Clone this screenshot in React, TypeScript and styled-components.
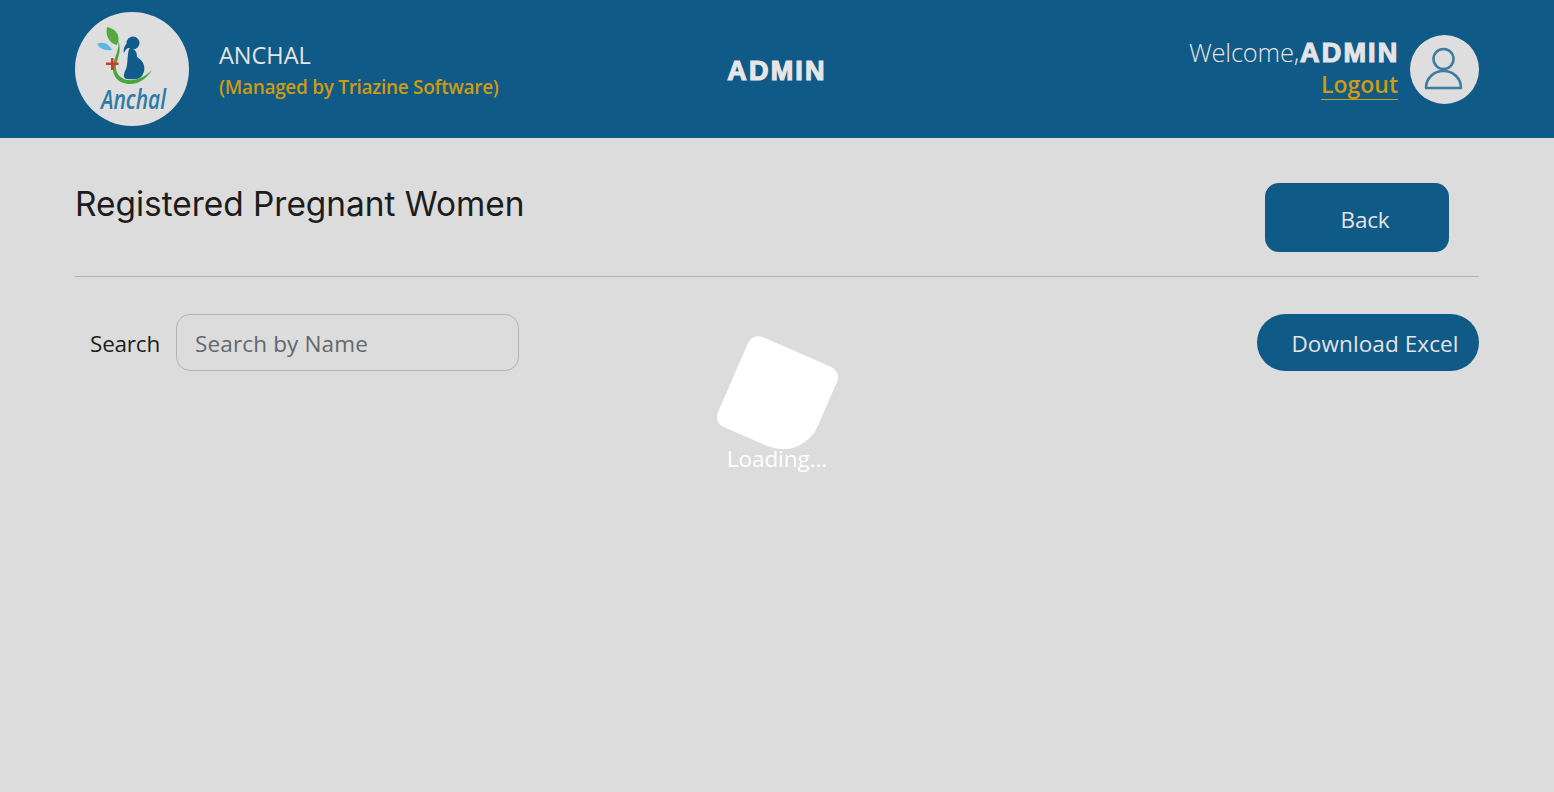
import React from "react";
import styled, { createGlobalStyle } from "styled-components";

const Global = createGlobalStyle`
  html, body { margin: 0; padding: 0; background: #dcdcdc; }
  body { font-family: "Open Sans", "Noto Sans", sans-serif; }
  * { box-sizing: border-box; }
`;

const Page = styled.div`
  position: relative;
  min-height: 792px;
  overflow: hidden;
  background: #dcdcdc;
`;

const Header = styled.header`
  height: 138px;
  background: #105a87;
  padding: 0 75px;
  display: grid;
  grid-template-columns: 1fr auto 1fr;
  align-items: center;
`;

const Brand = styled.div`
  display: flex;
  align-items: center;
  gap: 30px;
`;

const LogoCircle = styled.div`
  width: 114px;
  height: 114px;
  border-radius: 50%;
  background: #dedede;
  flex: none;
  overflow: hidden;
`;

const BrandText = styled.div`
  display: flex;
  flex-direction: column;
  gap: 3px;
`;

const BrandName = styled.div`
  font-size: 23.5px;
  line-height: 32px;
  color: #e4e4e4;
`;

const BrandSub = styled.div`
  font-size: 19px;
  line-height: 26px;
  font-weight: 600;
  color: #cf9b10;
  letter-spacing: -0.3px;
`;

const CenterTitle = styled.div`
  font-family: "Liberation Sans", sans-serif;
  font-size: 27px;
  font-weight: 700;
  color: #e6e6e6;
  -webkit-text-stroke: 1.2px #e6e6e6;
  letter-spacing: 2.2px;
  padding-top: 4px;
`;

const UserBlock = styled.div`
  display: flex;
  justify-content: flex-end;
  align-items: center;
  gap: 12px;
`;

const UserText = styled.div`
  display: flex;
  flex-direction: column;
  align-items: flex-end;
  margin-bottom: 4px;
`;

const Welcome = styled.div`
  font-size: 25.5px;
  line-height: 34px;
  font-weight: 300;
  color: #e4e4e4;
  letter-spacing: -0.2px;
  display: flex;
  align-items: baseline;
`;

const WelcomeName = styled.span`
  font-family: "Liberation Sans", sans-serif;
  font-size: 27px;
  font-weight: 700;
  -webkit-text-stroke: 1.2px #e4e4e4;
  letter-spacing: 2.2px;
  margin-left: 1px;
  margin-right: -1.5px;
`;

const Logout = styled.a`
  font-size: 23px;
  line-height: 28px;
  font-weight: 600;
  color: #cf9b10;
  border-bottom: 1px solid #cf9b10;
  letter-spacing: 0;
  padding: 0 0 1px 0;
`;

const Avatar = styled.div`
  width: 69px;
  height: 69px;
  border-radius: 50%;
  background: #dedede;
  display: flex;
  align-items: center;
  justify-content: center;
  flex: none;
`;

const Main = styled.main`
  padding: 0 75px;
`;

const TitleRow = styled.div`
  height: 139px;
  padding: 45px 30px 0 0;
  border-bottom: 1px solid #b2b2b2;
  display: flex;
  justify-content: space-between;
  align-items: flex-start;
`;

const Title = styled.h1`
  margin: 1px 0 0;
  font-family: Inter, sans-serif;
  font-size: 33.4px;
  line-height: 41px;
  font-weight: 400;
  color: #1c1c1c;
`;

const BackButton = styled.button`
  width: 184px;
  height: 69px;
  border: 0;
  border-radius: 14px;
  background: #105a87;
  color: #e4e4e4;
  font: 400 22.5px "Open Sans", sans-serif;
  letter-spacing: -0.2px;
  padding: 3px 0 0 16px;
`;

const Toolbar = styled.div`
  margin-top: 37px;
  display: flex;
  justify-content: space-between;
  align-items: center;
`;

const SearchGroup = styled.label`
  display: flex;
  align-items: center;
  gap: 16px;
  padding-left: 15px;
`;

const SearchLabel = styled.span`
  font-size: 22.5px;
  color: #1c1c1c;
  letter-spacing: -0.2px;
  padding-top: 1px;
`;

const SearchInput = styled.input`
  width: 343px;
  height: 57px;
  border: 1px solid #b4b4b4;
  border-radius: 14px;
  background: transparent;
  padding: 2px 18px 0;
  font: 400 22.5px "Open Sans", sans-serif;
  letter-spacing: 0.15px;
  outline: none;
  &::placeholder { color: #62686e; opacity: 1; }
`;

const ExcelButton = styled.button`
  width: 222px;
  height: 57px;
  border: 0;
  border-radius: 29px;
  background: #105a87;
  color: #e4e4e4;
  font: 400 22.5px "Open Sans", sans-serif;
  letter-spacing: 0.1px;
  padding: 2px 0 0 14px;
`;

const LoaderOverlay = styled.div`
  position: absolute;
  left: 0;
  right: 0;
  top: 348px;
  display: flex;
  flex-direction: column;
  align-items: center;
`;

const LoaderSquare = styled.div`
  width: 97px;
  height: 98px;
  background: #fff;
  border-radius: 11px 11px 38px 11px;
  transform: rotate(23.5deg);
`;

const LoaderText = styled.div`
  margin-top: -2px;
  font-size: 22.5px;
  line-height: 30px;
  color: #fff;
  letter-spacing: -0.05px;
`;

const LogoText = styled.text`
  font-family: "Open Sans", sans-serif;
  font-size: 27px;
  font-style: italic;
  font-weight: 600;
  fill: #2f7aa6;
`;

const Logo = () => (
  <svg width="114" height="114" viewBox="0 0 114 114">
    <path d="M32 15 C42 17 46 24 42 33 C35 32 30 24 32 15Z" fill="#55a93f" />
    <path d="M22 32 C28 29 34 32 37 38 C30 39 25 37 22 32Z" fill="#5cb8de" />
    <path d="M43 28 C45 38 39 45 38 54 C37 64 43 71 53 72 C64 73 72 66 77 58 C70 65 61 69 52 68 C44 66 40 60 41 53 C43 45 47 38 43 28Z" fill="#4aa53a" />
    <path d="M31 50.5 H36 V46 H38.5 V50.5 H43.5 V53 H38.5 V58 H36 V53 H31Z" fill="#cf3a2c" />
    <circle cx="58" cy="31" r="6.5" fill="#125c8c" />
    <path d="M53 30 C49 34 48 38 49 41 C50 38 52 36 54 36Z" fill="#125c8c" />
    <path d="M54 37 C60 36 62 40 62 45 C69 49 71 56 68 62 C66 67 60 68 52 67 C47 66 49 61 51 57 C53 52 52 44 54 37Z" fill="#125c8c" />
    <LogoText x="26" y="97" textLength="65" lengthAdjust="spacingAndGlyphs">Anchal</LogoText>
  </svg>
);

const UserIcon = () => (
  <svg width="42" height="46" viewBox="0 0 42 46" fill="none" stroke="#3f7c9f" strokeWidth="2.6">
    <circle cx="19.5" cy="13" r="10" />
    <path d="M2 42 C2 32 10 25 19.5 25 C29 25 37 32 37 42 Z" strokeLinejoin="round" />
  </svg>
);

export default function App() {
  return (
    <Page>
      <Global />
      <Header>
        <Brand>
          <LogoCircle><Logo /></LogoCircle>
          <BrandText>
            <BrandName>ANCHAL</BrandName>
            <BrandSub>(Managed by Triazine Software)</BrandSub>
          </BrandText>
        </Brand>
        <CenterTitle>ADMIN</CenterTitle>
        <UserBlock>
          <UserText>
            <Welcome>Welcome,<WelcomeName>ADMIN</WelcomeName></Welcome>
            <Logout>Logout</Logout>
          </UserText>
          <Avatar><UserIcon /></Avatar>
        </UserBlock>
      </Header>
      <Main>
        <TitleRow>
          <Title>Registered Pregnant Women</Title>
          <BackButton>Back</BackButton>
        </TitleRow>
        <Toolbar>
          <SearchGroup>
            <SearchLabel>Search</SearchLabel>
            <SearchInput placeholder="Search by Name" />
          </SearchGroup>
          <ExcelButton>Download Excel</ExcelButton>
        </Toolbar>
      </Main>
      <LoaderOverlay>
        <LoaderSquare />
        <LoaderText>Loading...</LoaderText>
      </LoaderOverlay>
    </Page>
  );
}
